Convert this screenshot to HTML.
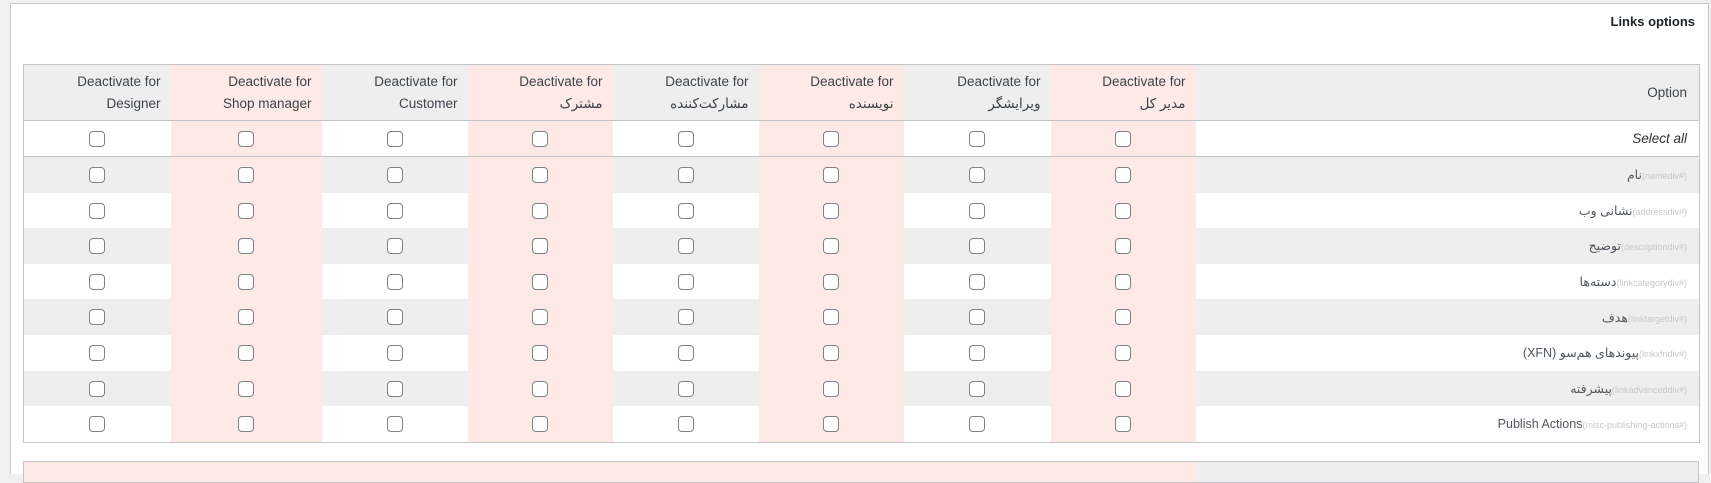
<!DOCTYPE html>
<html><head><meta charset="utf-8"><style>
body{margin:0;width:1711px;height:473px;background:#f0f0f1;font-family:"Liberation Sans","DejaVu Sans",sans-serif;overflow:hidden;position:relative}
.panel{position:absolute;left:10px;top:3px;width:1697px;height:470px;background:#fff;border:1px solid #c8c8c8;border-bottom:none}
.title{position:absolute;right:13px;top:10px;font-weight:bold;font-size:13px;color:#1d2327}
table{position:absolute;left:23px;border-collapse:collapse;table-layout:fixed;width:1676px;border:1px solid #c3c4c7}
td,th{padding:0 10px 0 0;text-align:right;font-weight:normal;color:#3c434a;font-size:13.5px}
thead th{height:55px;background:#eee;line-height:22px;border-bottom:1px solid #c3c4c7}
th.p,td.p{background:#fde9e5}
tr.sa td{height:35px;border-bottom:1px solid #c3c4c7;background:#fff}
tr.sa td.p{background:#fde9e5}
tbody tr.r td{height:35.6px;background:#fff}
tbody tr.g td{background:#eee}
tbody tr td.p{background:#fde9e5}
td.c{text-align:center;padding:0}
.cb{display:inline-block;width:14px;height:14px;border:1px solid #7e8288;border-radius:4px;background:#fff;vertical-align:middle}
.lab{font-size:12.5px;color:#50575e;padding-right:12px}
.lab small{font-size:9px;color:#c8c8c8}
.sel{font-style:italic;color:#333}
</style></head><body>
<div class="panel"><div class="title">Links options</div></div>
<table style="top:64px">
<colgroup><col style="width:147px"><col style="width:151px"><col style="width:146px"><col style="width:145px"><col style="width:146px"><col style="width:145px"><col style="width:147px"><col style="width:145px"><col style="width:504px"></colgroup>
<thead><tr>
<th>Deactivate for<br>Designer</th>
<th class="p">Deactivate for<br>Shop manager</th>
<th>Deactivate for<br>Customer</th>
<th class="p">Deactivate for<br><span dir="rtl">مشترک</span></th>
<th>Deactivate for<br><span dir="rtl">مشارکت‌کننده</span></th>
<th class="p">Deactivate for<br><span dir="rtl">نویسنده</span></th>
<th>Deactivate for<br><span dir="rtl">ویرایشگر</span></th>
<th class="p">Deactivate for<br><span dir="rtl">مدیر کل</span></th>
<th style="padding-right:12px">Option</th>
</tr></thead>
<tbody>
<tr class="sa"><td class="c"><span class="cb"></span></td><td class="c p"><span class="cb"></span></td><td class="c"><span class="cb"></span></td><td class="c p"><span class="cb"></span></td><td class="c"><span class="cb"></span></td><td class="c p"><span class="cb"></span></td><td class="c"><span class="cb"></span></td><td class="c p"><span class="cb"></span></td><td class="sel" style="padding-right:12px">Select all</td></tr>
<tr class="r g"><td class="c"><span class="cb"></span></td><td class="c p"><span class="cb"></span></td><td class="c"><span class="cb"></span></td><td class="c p"><span class="cb"></span></td><td class="c"><span class="cb"></span></td><td class="c p"><span class="cb"></span></td><td class="c"><span class="cb"></span></td><td class="c p"><span class="cb"></span></td><td class="lab">نام<small>(namediv#)</small></td></tr>
<tr class="r"><td class="c"><span class="cb"></span></td><td class="c p"><span class="cb"></span></td><td class="c"><span class="cb"></span></td><td class="c p"><span class="cb"></span></td><td class="c"><span class="cb"></span></td><td class="c p"><span class="cb"></span></td><td class="c"><span class="cb"></span></td><td class="c p"><span class="cb"></span></td><td class="lab">نشانی وب<small>(addressdiv#)</small></td></tr>
<tr class="r g"><td class="c"><span class="cb"></span></td><td class="c p"><span class="cb"></span></td><td class="c"><span class="cb"></span></td><td class="c p"><span class="cb"></span></td><td class="c"><span class="cb"></span></td><td class="c p"><span class="cb"></span></td><td class="c"><span class="cb"></span></td><td class="c p"><span class="cb"></span></td><td class="lab">توضیح<small>(descriptiondiv#)</small></td></tr>
<tr class="r"><td class="c"><span class="cb"></span></td><td class="c p"><span class="cb"></span></td><td class="c"><span class="cb"></span></td><td class="c p"><span class="cb"></span></td><td class="c"><span class="cb"></span></td><td class="c p"><span class="cb"></span></td><td class="c"><span class="cb"></span></td><td class="c p"><span class="cb"></span></td><td class="lab">دسته‌ها<small>(linkcategorydiv#)</small></td></tr>
<tr class="r g"><td class="c"><span class="cb"></span></td><td class="c p"><span class="cb"></span></td><td class="c"><span class="cb"></span></td><td class="c p"><span class="cb"></span></td><td class="c"><span class="cb"></span></td><td class="c p"><span class="cb"></span></td><td class="c"><span class="cb"></span></td><td class="c p"><span class="cb"></span></td><td class="lab">هدف<small>(linktargetdiv#)</small></td></tr>
<tr class="r"><td class="c"><span class="cb"></span></td><td class="c p"><span class="cb"></span></td><td class="c"><span class="cb"></span></td><td class="c p"><span class="cb"></span></td><td class="c"><span class="cb"></span></td><td class="c p"><span class="cb"></span></td><td class="c"><span class="cb"></span></td><td class="c p"><span class="cb"></span></td><td class="lab">(XFN) پیوندهای هم‌سو<small>(linkxfndiv#)</small></td></tr>
<tr class="r g"><td class="c"><span class="cb"></span></td><td class="c p"><span class="cb"></span></td><td class="c"><span class="cb"></span></td><td class="c p"><span class="cb"></span></td><td class="c"><span class="cb"></span></td><td class="c p"><span class="cb"></span></td><td class="c"><span class="cb"></span></td><td class="c p"><span class="cb"></span></td><td class="lab">پیشرفته<small>(linkadvanceddiv#)</small></td></tr>
<tr class="r"><td class="c"><span class="cb"></span></td><td class="c p"><span class="cb"></span></td><td class="c"><span class="cb"></span></td><td class="c p"><span class="cb"></span></td><td class="c"><span class="cb"></span></td><td class="c p"><span class="cb"></span></td><td class="c"><span class="cb"></span></td><td class="c p"><span class="cb"></span></td><td class="lab">Publish Actions<small>(misc-publishing-actions#)</small></td></tr>
</tbody></table>
<div style="position:absolute;left:23px;top:461px;width:1674px;height:20px;border:1px solid #c3c4c7;background:linear-gradient(to right,#fde9e5 0,#fde9e5 1172px,#eee 1172px)"></div>
</body></html>
